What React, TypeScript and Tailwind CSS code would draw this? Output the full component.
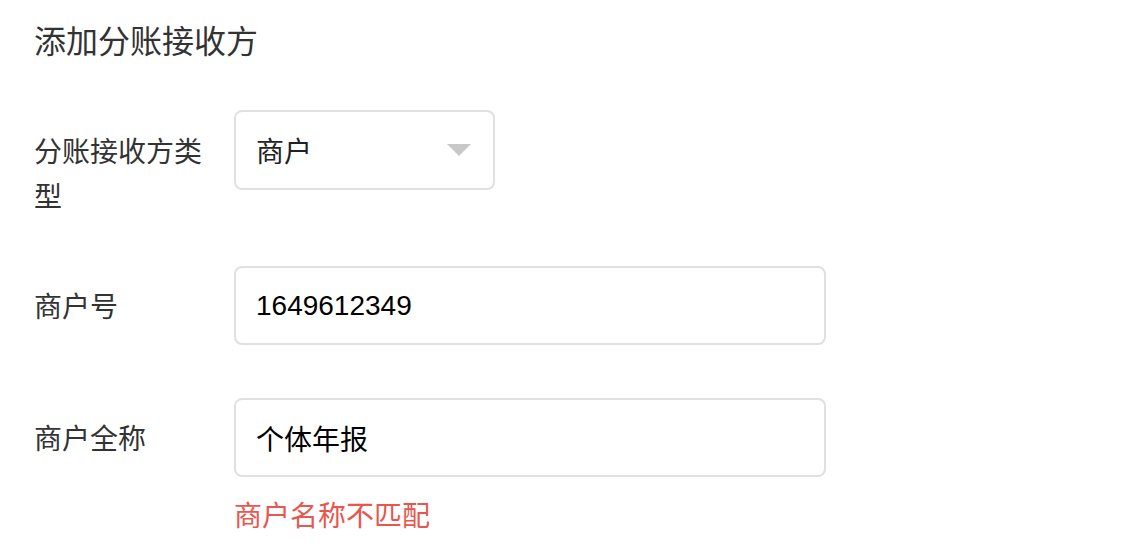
import React from "react";

const cjk = { fontFamily: '"Noto Sans CJK SC", "Noto Sans", sans-serif' };
const mixed = { fontFamily: '"Liberation Sans", "Noto Sans CJK SC", sans-serif' };

export default function App() {
  return (
    <div className="w-[1132px] h-[546px] bg-white pl-[34px] pt-[17px] text-[#333333]" style={cjk}>
      <h1 className="text-[32px] leading-[44px] font-normal">添加分账接收方</h1>

      <div className="flex items-start mt-[49px]">
        <div className="w-[180px] mr-[20px] pt-[18px] text-[28px] leading-[45px]">分账接收方类型</div>
        <div className="w-[261px] h-[80px] border-2 border-[#e0e0e0] rounded-[8px] flex items-center justify-between pl-[20px] pr-[22px]">
          <span className="text-[28px] text-[#222]">商户</span>
          <svg width="24" height="12" viewBox="0 0 24 12">
            <polygon points="0,0 24,0 12,12" fill="#c8c8c8" />
          </svg>
        </div>
      </div>

      <div className="flex items-start mt-[48px]">
        <div className="w-[180px] mr-[20px] pt-[17px] text-[28px] leading-[45px]">商户号</div>
        <div className="w-[592px] h-[79px] border-2 border-[#e0e0e0] rounded-[8px] flex items-center pl-[20px]">
          <span className="text-[28px] text-black" style={mixed}>1649612349</span>
        </div>
      </div>

      <div className="flex items-start mt-[53px]">
        <div className="w-[180px] mr-[20px] pt-[17px] text-[28px] leading-[45px]">商户全称</div>
        <div className="flex flex-col">
          <div className="w-[592px] h-[79px] border-2 border-[#e0e0e0] rounded-[8px] flex items-center pl-[20px]">
            <span className="text-[28px] text-black">个体年报</span>
          </div>
          <div className="mt-[15px] text-[28px] leading-[45px] text-[#e8564e]">商户名称不匹配</div>
        </div>
      </div>
    </div>
  );
}
